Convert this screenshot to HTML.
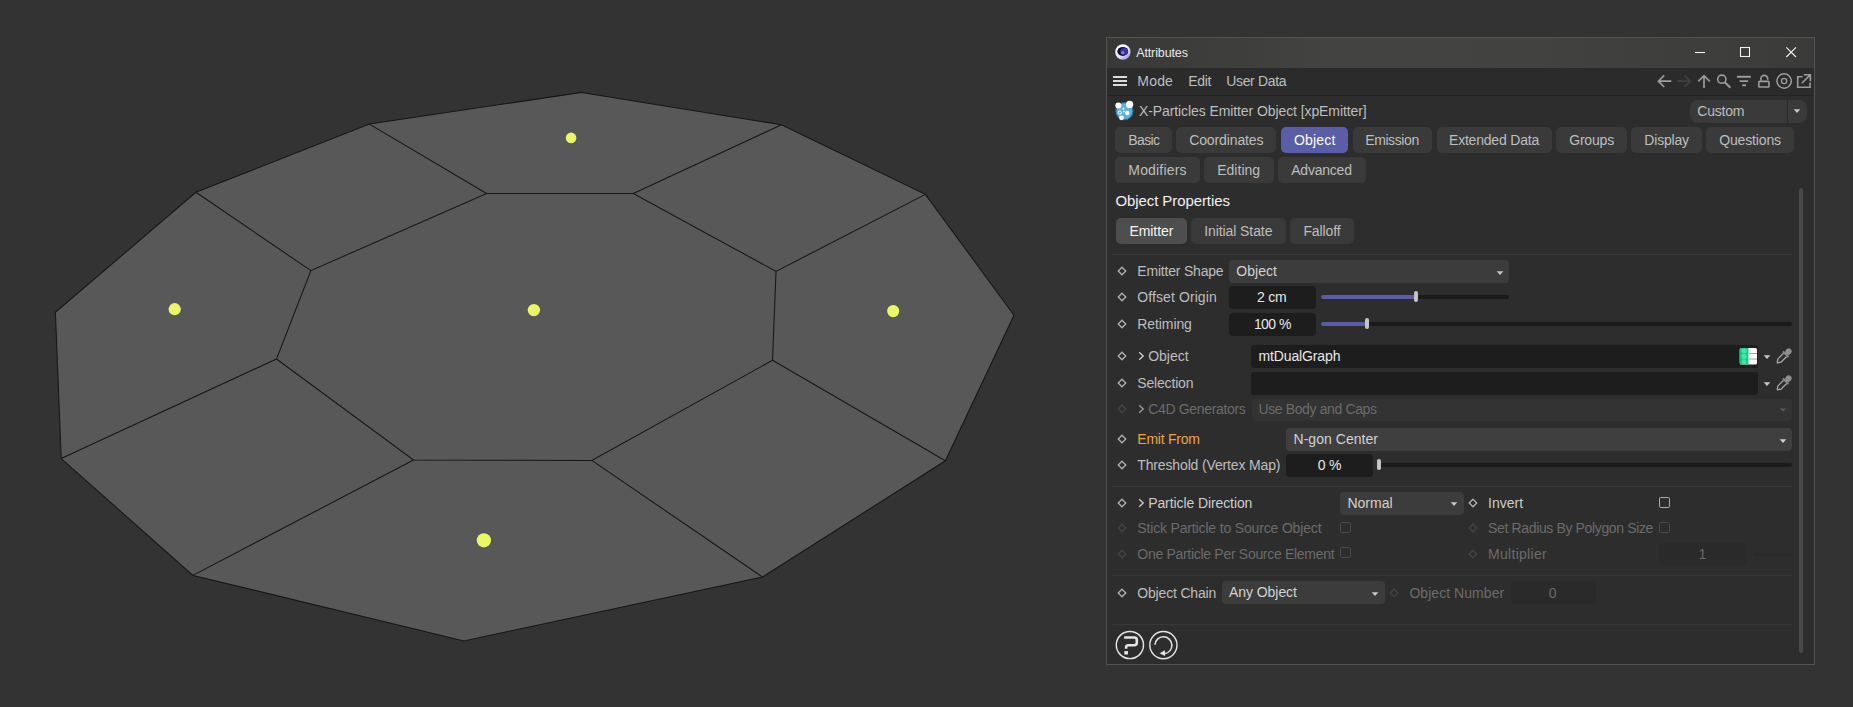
<!DOCTYPE html>
<html lang="en"><head><meta charset="utf-8"><title>Attributes</title><style>
html,body{margin:0;padding:0;background:#333333;overflow:hidden}
body{width:1853px;height:707px;position:relative;font-family:"Liberation Sans",sans-serif}
.b{position:absolute;display:block;box-sizing:content-box}
.t{position:absolute;white-space:nowrap;line-height:20px;height:20px}
.win{background:#2d2d2d;border:1px solid #535353;box-sizing:border-box}
</style></head>
<body>
<svg class="b" style="left:0;top:0" width="1060" height="707" viewBox="0 0 1060 707">
<polygon points="581.5,92.4 781.4,124.8 925.4,194.4 1014.0,315.3 945.4,460.8 762.5,577.0 464.0,640.9 192.9,575.4 61.2,458.6 55.4,312.3 195.9,192.3 369.4,124.1" fill="#585858" stroke="#161616" stroke-width="1.05"/>
<polygon points="486.6,193.5 633.3,193.5 776.0,271.4 772.5,360.3 591.8,460.4 413.5,460.0 276.5,358.95 310.9,270.6" fill="none" stroke="#161616" stroke-width="1.05"/>
<line x1="486.6" y1="193.5" x2="369.4" y2="124.1" stroke="#161616" stroke-width="1.05"/>
<line x1="633.3" y1="193.5" x2="781.4" y2="124.8" stroke="#161616" stroke-width="1.05"/>
<line x1="776.0" y1="271.4" x2="925.4" y2="194.4" stroke="#161616" stroke-width="1.05"/>
<line x1="772.5" y1="360.3" x2="945.4" y2="460.8" stroke="#161616" stroke-width="1.05"/>
<line x1="591.8" y1="460.4" x2="762.5" y2="577.0" stroke="#161616" stroke-width="1.05"/>
<line x1="413.5" y1="460.0" x2="192.9" y2="575.4" stroke="#161616" stroke-width="1.05"/>
<line x1="276.5" y1="358.95" x2="61.2" y2="458.6" stroke="#161616" stroke-width="1.05"/>
<line x1="310.9" y1="270.6" x2="195.9" y2="192.3" stroke="#161616" stroke-width="1.05"/>
<circle cx="571.1" cy="137.9" r="5.3" fill="#ebf766"/>
<circle cx="174.7" cy="309.2" r="6.1" fill="#ebf766"/>
<circle cx="533.9" cy="310.1" r="6.2" fill="#ebf766"/>
<circle cx="893.2" cy="311.1" r="6.1" fill="#ebf766"/>
<circle cx="483.9" cy="540.3" r="7.1" fill="#ebf766"/>
</svg>
<div class="b win" style="left:1106px;top:37px;width:709px;height:628px"></div>
<div class="b" style="left:1107.00px;top:38.00px;width:707.00px;height:30.00px;background:linear-gradient(90deg,#383837 0%,#434341 32%,#424240 60%,#3b3b39 100%);border-radius:0px;"></div>
<div class="b" style="left:1107.00px;top:68.00px;width:707.00px;height:27.00px;background:#2b2b2b;border-radius:0px;"></div>
<div class="b" style="left:1107.00px;top:95.00px;width:707.00px;height:1.00px;background:#232323;border-radius:0px;"></div>
<svg class="b" style="left:1114px;top:43px" width="18" height="18" viewBox="0 0 18 18">
<defs><linearGradient id="lg" x1="0.15" y1="0.1" x2="0.85" y2="0.95"><stop offset="0" stop-color="#ffffff"/><stop offset="0.55" stop-color="#e6e6f6"/><stop offset="1" stop-color="#9a97da"/></linearGradient></defs>
<circle cx="8.9" cy="9" r="7.7" fill="url(#lg)"/>
<ellipse cx="8.8" cy="8.4" rx="5.4" ry="4.5" fill="#0c0a34"/>
<ellipse cx="10.1" cy="8.5" rx="3.8" ry="3.6" fill="#3a35a2"/>
<circle cx="8.7" cy="9.7" r="1.6" fill="#8b88e4" opacity="0.85"/>
</svg>
<div class="t " style="left:1136.20px;top:42.87px;font-size:12.5px;color:#e8e8e8;letter-spacing:-0.121px;">Attributes</div>
<svg class="b" style="left:1690px;top:44px" width="112" height="16" viewBox="1690 44 112 16" fill="none" stroke="#f0f0f0" stroke-width="1.1">
<path d="M1695 52.5H1705"/>
<rect x="1740.5" y="47.5" width="9" height="9"/>
<path d="M1786.3 47.3L1796 57M1796 47.3L1786.3 57"/>
</svg>
<div class="b" style="left:1113.00px;top:76.10px;width:14.20px;height:2.20px;background:#dcdcdc;border-radius:0px;"></div>
<div class="b" style="left:1113.00px;top:80.10px;width:14.20px;height:2.20px;background:#dcdcdc;border-radius:0px;"></div>
<div class="b" style="left:1113.00px;top:84.00px;width:14.20px;height:2.20px;background:#dcdcdc;border-radius:0px;"></div>
<div class="t " style="left:1137.30px;top:71.05px;font-size:14px;color:#bebebe;letter-spacing:0.192px;">Mode</div>
<div class="t " style="left:1188.30px;top:71.05px;font-size:14px;color:#bebebe;letter-spacing:-0.381px;">Edit</div>
<div class="t " style="left:1226.30px;top:71.05px;font-size:14px;color:#bebebe;letter-spacing:-0.359px;">User Data</div>
<svg class="b" style="left:1654px;top:72px" width="160" height="20" viewBox="1654 72 160 20" fill="none" stroke="#9c9c9c" stroke-width="1.7" stroke-linecap="butt">
<path d="M1671.3 81.2H1658.8M1664.2 75.4L1658.4 81.2L1664.2 87"/>
<g stroke="#414141"><path d="M1677.4 81.2H1689.8M1684.4 75.4L1690.2 81.2L1684.4 87"/></g>
<path d="M1704 88V75.8M1698.2 81.4L1704 75.6L1709.8 81.4"/>
<circle cx="1721.8" cy="79.2" r="4.1" stroke-width="1.6"/><path d="M1724.8 82.3L1730.4 87.7" stroke-width="2"/>
<path d="M1736.9 76.7H1750.8M1739.6 81.1H1748.1M1742.3 85.3H1745.9" stroke-width="1.9"/>
<rect x="1758.8" y="81.4" width="10.2" height="5.6" rx="0.8" stroke-width="1.6"/><path d="M1760.9 80.8V78.8a3.4 3.4 0 0 1 6.8 0V79.8" stroke-width="1.6"/>
<circle cx="1784.1" cy="81" r="7.2" stroke-width="1.5"/><circle cx="1784.1" cy="81" r="2.6" stroke-width="1.4"/>
<path d="M1802.6 76.8H1797.7V87.3H1810.1V82.4M1803.8 74.7H1810.4V81.3M1810.2 74.9L1801.8 83.3" stroke-width="1.6"/>
</svg>
<svg class="b" style="left:1114px;top:100px" width="21" height="21" viewBox="0 0 21 21">
<circle cx="10.4" cy="11.2" r="8.6" fill="#5db1dd" stroke="#2b6a96" stroke-width="1.1"/>
<circle cx="4.3" cy="5.4" r="3" fill="#fff"/>
<circle cx="15.6" cy="4.4" r="3.6" fill="#fff"/>
<circle cx="9.4" cy="8.7" r="1" fill="#fff"/>
<circle cx="9.9" cy="11.6" r="0.8" fill="#fff"/>
<circle cx="5.8" cy="12.6" r="1.6" fill="none" stroke="#fff" stroke-width="1"/>
<circle cx="13.2" cy="13" r="2.2" fill="#fff"/>
<circle cx="7.5" cy="17.8" r="2.4" fill="#fff"/>
</svg>
<div class="t " style="left:1138.90px;top:101.15px;font-size:14px;color:#bebebe;letter-spacing:-0.088px;">X-Particles Emitter Object [xpEmitter]</div>
<div class="b" style="left:1690.00px;top:100.00px;width:117.00px;height:23.00px;background:#3a3a3a;border-radius:8px;"></div>
<div class="b" style="left:1787.00px;top:100.00px;width:1.00px;height:23.00px;background:#2a2a2a;border-radius:0px;"></div>
<div class="t " style="left:1697.30px;top:101.15px;font-size:14px;color:#bebebe;letter-spacing:-0.239px;">Custom</div>
<svg class="b" style="left:1792.00px;top:107.00px" width="10" height="8" viewBox="-5 -4 10 8"><path d="M-3.30 -1.70L3.30 -1.70L0 1.90Z" fill="#c8c8c8"/></svg>
<div class="b" style="left:1115.40px;top:127.20px;width:56.60px;height:25.50px;background:#3a3a3a;border-radius:5px;"></div>
<div class="t " style="left:1128.30px;top:130.15px;font-size:14px;color:#bebebe;letter-spacing:-0.647px;">Basic</div>
<div class="b" style="left:1176.30px;top:127.20px;width:100.20px;height:25.50px;background:#3a3a3a;border-radius:5px;"></div>
<div class="t " style="left:1189.20px;top:130.15px;font-size:14px;color:#bebebe;letter-spacing:-0.118px;">Coordinates</div>
<div class="b" style="left:1281.10px;top:127.20px;width:66.70px;height:25.50px;background:#5a5ea8;border-radius:5px;"></div>
<div class="t " style="left:1294.00px;top:130.15px;font-size:14px;color:#ffffff;letter-spacing:0.172px;">Object</div>
<div class="b" style="left:1352.80px;top:127.20px;width:79.00px;height:25.50px;background:#3a3a3a;border-radius:5px;"></div>
<div class="t " style="left:1365.20px;top:130.15px;font-size:14px;color:#bebebe;letter-spacing:-0.400px;">Emission</div>
<div class="b" style="left:1436.50px;top:127.20px;width:115.50px;height:25.50px;background:#3a3a3a;border-radius:5px;"></div>
<div class="t " style="left:1449.00px;top:130.15px;font-size:14px;color:#bebebe;letter-spacing:-0.202px;">Extended Data</div>
<div class="b" style="left:1556.30px;top:127.20px;width:70.40px;height:25.50px;background:#3a3a3a;border-radius:5px;"></div>
<div class="t " style="left:1569.20px;top:130.15px;font-size:14px;color:#bebebe;letter-spacing:-0.187px;">Groups</div>
<div class="b" style="left:1631.20px;top:127.20px;width:70.60px;height:25.50px;background:#3a3a3a;border-radius:5px;"></div>
<div class="t " style="left:1644.30px;top:130.15px;font-size:14px;color:#bebebe;letter-spacing:-0.187px;">Display</div>
<div class="b" style="left:1706.10px;top:127.20px;width:87.80px;height:25.50px;background:#3a3a3a;border-radius:5px;"></div>
<div class="t " style="left:1719.20px;top:130.15px;font-size:14px;color:#bebebe;letter-spacing:-0.139px;">Questions</div>
<div class="b" style="left:1115.40px;top:157.20px;width:84.20px;height:25.50px;background:#3a3a3a;border-radius:5px;"></div>
<div class="t " style="left:1128.30px;top:160.05px;font-size:14px;color:#bebebe;letter-spacing:0.178px;">Modifiers</div>
<div class="b" style="left:1204.10px;top:157.20px;width:69.70px;height:25.50px;background:#3a3a3a;border-radius:5px;"></div>
<div class="t " style="left:1217.20px;top:160.05px;font-size:14px;color:#bebebe;letter-spacing:0.027px;">Editing</div>
<div class="b" style="left:1278.40px;top:157.20px;width:87.30px;height:25.50px;background:#3a3a3a;border-radius:5px;"></div>
<div class="t " style="left:1291.20px;top:160.05px;font-size:14px;color:#bebebe;letter-spacing:-0.210px;">Advanced</div>
<div class="t " style="left:1115.40px;top:191.20px;font-size:15px;color:#f2f2f2;letter-spacing:-0.082px;">Object Properties</div>
<div class="b" style="left:1115.80px;top:218.20px;width:71.10px;height:25.50px;background:#4e4e4e;border-radius:5px;"></div>
<div class="t " style="left:1129.40px;top:220.85px;font-size:14px;color:#f4f4f4;letter-spacing:-0.049px;">Emitter</div>
<div class="b" style="left:1191.00px;top:218.20px;width:95.10px;height:25.50px;background:#3a3a3a;border-radius:5px;"></div>
<div class="t " style="left:1204.20px;top:220.85px;font-size:14px;color:#bebebe;letter-spacing:-0.082px;">Initial State</div>
<div class="b" style="left:1290.10px;top:218.20px;width:63.90px;height:25.50px;background:#3a3a3a;border-radius:5px;"></div>
<div class="t " style="left:1303.40px;top:220.85px;font-size:14px;color:#bebebe;letter-spacing:-0.096px;">Falloff</div>
<div class="b" style="left:1112.40px;top:253.60px;width:679.40px;height:1.00px;background:#383838;border-radius:0px;"></div>
<svg class="b" style="left:1116.00px;top:265.40px" width="12" height="12" viewBox="-6 -6 12 12"><path d="M0-3.8L3.8 0L0 3.8L-3.8 0Z" fill="none" stroke="#b4b4b4" stroke-width="1.25"/></svg>
<div class="t " style="left:1137.30px;top:261.35px;font-size:14px;color:#bebebe;letter-spacing:-0.201px;">Emitter Shape</div>
<div class="b" style="left:1229.00px;top:260.40px;width:280.40px;height:22.60px;background:#3c3c3c;border-radius:4px;"></div>
<div class="t " style="left:1236.30px;top:261.35px;font-size:14px;color:#d2d2d2;letter-spacing:0.022px;">Object</div>
<svg class="b" style="left:1494.90px;top:268.60px" width="10" height="8" viewBox="-5 -4 10 8"><path d="M-3.30 -1.70L3.30 -1.70L0 1.90Z" fill="#c8c8c8"/></svg>
<svg class="b" style="left:1116.00px;top:291.40px" width="12" height="12" viewBox="-6 -6 12 12"><path d="M0-3.8L3.8 0L0 3.8L-3.8 0Z" fill="none" stroke="#b4b4b4" stroke-width="1.25"/></svg>
<div class="t " style="left:1137.30px;top:287.35px;font-size:14px;color:#bebebe;letter-spacing:0.090px;">Offset Origin</div>
<div class="b" style="left:1229.00px;top:286.40px;width:87.20px;height:22.40px;background:#1d1d1d;border-radius:4px;"></div>
<div class="t " style="left:1257.10px;top:287.35px;font-size:14px;color:#e8e8e8;letter-spacing:-0.236px;">2 cm</div>
<div class="b" style="left:1320.70px;top:294.60px;width:188.70px;height:4.00px;background:#1b1b1b;border-radius:2px;"></div>
<div class="b" style="left:1320.70px;top:294.60px;width:95.10px;height:4.00px;background:#5a5da6;border-radius:2px;"></div>
<div class="b" style="left:1413.80px;top:291.10px;width:4.00px;height:11.00px;background:#c4c4c4;border-radius:2px;"></div>
<svg class="b" style="left:1116.00px;top:318.00px" width="12" height="12" viewBox="-6 -6 12 12"><path d="M0-3.8L3.8 0L0 3.8L-3.8 0Z" fill="none" stroke="#b4b4b4" stroke-width="1.25"/></svg>
<div class="t " style="left:1137.30px;top:314.05px;font-size:14px;color:#bebebe;letter-spacing:-0.094px;">Retiming</div>
<div class="b" style="left:1229.00px;top:313.40px;width:87.20px;height:22.40px;background:#1d1d1d;border-radius:4px;"></div>
<div class="t " style="left:1253.90px;top:314.05px;font-size:14px;color:#e8e8e8;letter-spacing:-0.561px;">100 %</div>
<div class="b" style="left:1320.70px;top:321.70px;width:471.20px;height:4.00px;background:#1b1b1b;border-radius:2px;"></div>
<div class="b" style="left:1320.70px;top:321.70px;width:46.40px;height:4.00px;background:#5a5da6;border-radius:2px;"></div>
<div class="b" style="left:1365.10px;top:318.20px;width:4.00px;height:11.00px;background:#c4c4c4;border-radius:2px;"></div>
<svg class="b" style="left:1116.00px;top:350.20px" width="12" height="12" viewBox="-6 -6 12 12"><path d="M0-3.8L3.8 0L0 3.8L-3.8 0Z" fill="none" stroke="#b4b4b4" stroke-width="1.25"/></svg>
<svg class="b" style="left:1138.00px;top:351.20px" width="7" height="10" viewBox="0 0 7 10"><path d="M1.2 1.3L5.2 5L1.2 8.7" fill="none" stroke="#c9c9c9" stroke-width="1.4"/></svg>
<div class="t " style="left:1148.20px;top:346.15px;font-size:14px;color:#bebebe;letter-spacing:0.005px;">Object</div>
<div class="b" style="left:1251.20px;top:345.20px;width:506.70px;height:22.60px;background:#1d1d1d;border-radius:3px;"></div>
<div class="t " style="left:1258.40px;top:346.15px;font-size:14px;color:#e8e8e8;letter-spacing:-0.115px;">mtDualGraph</div>
<svg class="b" style="left:1739px;top:347px" width="19" height="18" viewBox="0 0 19 18">
<rect x="0.7" y="0.9" width="17.3" height="16.7" rx="1.6" fill="#ffffff"/>
<path d="M2.3 0.9H9.4V17.6H2.3a1.6 1.6 0 0 1 -1.6 -1.6V2.5a1.6 1.6 0 0 1 1.6 -1.6Z" fill="#17c482"/>
<circle cx="5.1" cy="3.9" r="2.7" fill="#35eaa4"/><circle cx="5.1" cy="9.4" r="2.7" fill="#35eaa4"/><circle cx="5.1" cy="14.7" r="2.5" fill="#35eaa4"/>
<path d="M9.8 6.5H18M9.8 12H18" stroke="#9c9c9c" stroke-width="1"/>
</svg>
<svg class="b" style="left:1762.00px;top:353.00px" width="10" height="8" viewBox="-5 -4 10 8"><path d="M-3.30 -1.70L3.30 -1.70L0 1.90Z" fill="#c8c8c8"/></svg>
<svg class="b" style="left:1774.40px;top:345.80px" width="20" height="20" viewBox="-10 -10 20 20"><g transform="rotate(45) translate(0 1.4)" fill="none" stroke="#a4a4a4" stroke-width="1.35" stroke-linejoin="round">
<path d="M-2.2 -3V5.2L0 8.1L2.2 5.2V-3"/>
<rect x="-4" y="-4.7" width="8" height="1.8" fill="#8e8e8e" stroke="none"/>
<ellipse cx="0" cy="-7.7" rx="3" ry="3.3" fill="#8e8e8e" stroke="none"/>
</g></svg>
<svg class="b" style="left:1116.00px;top:377.20px" width="12" height="12" viewBox="-6 -6 12 12"><path d="M0-3.8L3.8 0L0 3.8L-3.8 0Z" fill="none" stroke="#b4b4b4" stroke-width="1.25"/></svg>
<div class="t " style="left:1137.30px;top:373.35px;font-size:14px;color:#bebebe;letter-spacing:-0.177px;">Selection</div>
<div class="b" style="left:1251.20px;top:372.20px;width:506.70px;height:22.40px;background:#1d1d1d;border-radius:3px;"></div>
<svg class="b" style="left:1762.00px;top:379.80px" width="10" height="8" viewBox="-5 -4 10 8"><path d="M-3.30 -1.70L3.30 -1.70L0 1.90Z" fill="#c8c8c8"/></svg>
<svg class="b" style="left:1774.40px;top:372.60px" width="20" height="20" viewBox="-10 -10 20 20"><g transform="rotate(45) translate(0 1.4)" fill="none" stroke="#a4a4a4" stroke-width="1.35" stroke-linejoin="round">
<path d="M-2.2 -3V5.2L0 8.1L2.2 5.2V-3"/>
<rect x="-4" y="-4.7" width="8" height="1.8" fill="#8e8e8e" stroke="none"/>
<ellipse cx="0" cy="-7.7" rx="3" ry="3.3" fill="#8e8e8e" stroke="none"/>
</g></svg>
<svg class="b" style="left:1116.00px;top:403.20px" width="12" height="12" viewBox="-6 -6 12 12"><path d="M0-3.8L3.8 0L0 3.8L-3.8 0Z" fill="none" stroke="#474747" stroke-width="1.25"/></svg>
<svg class="b" style="left:1138.00px;top:404.20px" width="7" height="10" viewBox="0 0 7 10"><path d="M1.2 1.3L5.2 5L1.2 8.7" fill="none" stroke="#9a9a9a" stroke-width="1.4"/></svg>
<div class="t " style="left:1148.20px;top:399.35px;font-size:14px;color:#6b6b6b;letter-spacing:-0.331px;">C4D Generators</div>
<div class="b" style="left:1252.10px;top:398.80px;width:540.30px;height:21.80px;background:#333333;border-radius:4px;"></div>
<div class="t " style="left:1258.40px;top:399.35px;font-size:14px;color:#6b6b6b;letter-spacing:-0.372px;">Use Body and Caps</div>
<svg class="b" style="left:1778.30px;top:406.20px" width="10" height="8" viewBox="-5 -4 10 8"><path d="M-3.13 -1.61L3.13 -1.61L0 1.80Z" fill="#5a5a5a"/></svg>
<svg class="b" style="left:1116.00px;top:433.30px" width="12" height="12" viewBox="-6 -6 12 12"><path d="M0-3.8L3.8 0L0 3.8L-3.8 0Z" fill="none" stroke="#b4b4b4" stroke-width="1.25"/></svg>
<div class="t " style="left:1137.30px;top:429.25px;font-size:14px;color:#f2a23c;letter-spacing:-0.251px;">Emit From</div>
<div class="b" style="left:1286.10px;top:428.30px;width:506.30px;height:22.60px;background:#3f3f3f;border-radius:4px;"></div>
<div class="t " style="left:1293.50px;top:429.25px;font-size:14px;color:#d2d2d2;letter-spacing:0.038px;">N-gon Center</div>
<svg class="b" style="left:1778.30px;top:436.60px" width="10" height="8" viewBox="-5 -4 10 8"><path d="M-3.30 -1.70L3.30 -1.70L0 1.90Z" fill="#d0d0d0"/></svg>
<svg class="b" style="left:1116.00px;top:459.30px" width="12" height="12" viewBox="-6 -6 12 12"><path d="M0-3.8L3.8 0L0 3.8L-3.8 0Z" fill="none" stroke="#b4b4b4" stroke-width="1.25"/></svg>
<div class="t " style="left:1137.30px;top:454.75px;font-size:14px;color:#bebebe;letter-spacing:-0.145px;">Threshold (Vertex Map)</div>
<div class="b" style="left:1286.10px;top:454.30px;width:86.60px;height:22.40px;background:#1d1d1d;border-radius:4px;"></div>
<div class="t " style="left:1317.70px;top:454.75px;font-size:14px;color:#e8e8e8;letter-spacing:-0.242px;">0 %</div>
<div class="b" style="left:1377.30px;top:462.70px;width:414.60px;height:4.00px;background:#1b1b1b;border-radius:2px;"></div>
<div class="b" style="left:1377.30px;top:459.20px;width:4.00px;height:11.00px;background:#c4c4c4;border-radius:2px;"></div>
<div class="b" style="left:1112.40px;top:486.00px;width:679.40px;height:1.00px;background:#383838;border-radius:0px;"></div>
<svg class="b" style="left:1116.00px;top:497.20px" width="12" height="12" viewBox="-6 -6 12 12"><path d="M0-3.8L3.8 0L0 3.8L-3.8 0Z" fill="none" stroke="#b4b4b4" stroke-width="1.25"/></svg>
<svg class="b" style="left:1138.00px;top:498.20px" width="7" height="10" viewBox="0 0 7 10"><path d="M1.2 1.3L5.2 5L1.2 8.7" fill="none" stroke="#c9c9c9" stroke-width="1.4"/></svg>
<div class="t " style="left:1148.20px;top:493.45px;font-size:14px;color:#cccccc;letter-spacing:-0.096px;">Particle Direction</div>
<div class="b" style="left:1340.40px;top:492.30px;width:123.60px;height:22.40px;background:#3c3c3c;border-radius:4px;"></div>
<div class="t " style="left:1347.40px;top:493.45px;font-size:14px;color:#d2d2d2;letter-spacing:0.029px;">Normal</div>
<svg class="b" style="left:1448.60px;top:500.20px" width="10" height="8" viewBox="-5 -4 10 8"><path d="M-3.30 -1.70L3.30 -1.70L0 1.90Z" fill="#c8c8c8"/></svg>
<svg class="b" style="left:1467.10px;top:497.20px" width="12" height="12" viewBox="-6 -6 12 12"><path d="M0-3.8L3.8 0L0 3.8L-3.8 0Z" fill="none" stroke="#b4b4b4" stroke-width="1.25"/></svg>
<div class="t " style="left:1488.10px;top:493.45px;font-size:14px;color:#cccccc;letter-spacing:0.014px;">Invert</div>
<div class="b" style="left:1659.30px;top:497.30px;width:9.00px;height:9.00px;border:1.5px solid #adadad;border-radius:1.8px"></div>
<svg class="b" style="left:1116.00px;top:522.20px" width="12" height="12" viewBox="-6 -6 12 12"><path d="M0-3.8L3.8 0L0 3.8L-3.8 0Z" fill="none" stroke="#444444" stroke-width="1.25"/></svg>
<div class="t " style="left:1137.30px;top:518.35px;font-size:14px;color:#6b6b6b;letter-spacing:-0.161px;">Stick Particle to Source Object</div>
<div class="b" style="left:1340.20px;top:522.20px;width:8.60px;height:8.60px;border:1.5px solid #4b4b4b;border-radius:1.8px"></div>
<svg class="b" style="left:1467.10px;top:522.20px" width="12" height="12" viewBox="-6 -6 12 12"><path d="M0-3.8L3.8 0L0 3.8L-3.8 0Z" fill="none" stroke="#444444" stroke-width="1.25"/></svg>
<div class="t " style="left:1488.10px;top:518.35px;font-size:14px;color:#6b6b6b;letter-spacing:-0.363px;">Set Radius By Polygon Size</div>
<div class="b" style="left:1659.30px;top:522.30px;width:8.80px;height:8.80px;border:1.5px solid #484848;border-radius:1.8px"></div>
<svg class="b" style="left:1116.00px;top:548.20px" width="12" height="12" viewBox="-6 -6 12 12"><path d="M0-3.8L3.8 0L0 3.8L-3.8 0Z" fill="none" stroke="#444444" stroke-width="1.25"/></svg>
<div class="t " style="left:1137.30px;top:544.35px;font-size:14px;color:#6b6b6b;letter-spacing:-0.297px;">One Particle Per Source Element</div>
<div class="b" style="left:1340.20px;top:547.20px;width:8.60px;height:8.60px;border:1.5px solid #4b4b4b;border-radius:1.8px"></div>
<svg class="b" style="left:1467.10px;top:548.20px" width="12" height="12" viewBox="-6 -6 12 12"><path d="M0-3.8L3.8 0L0 3.8L-3.8 0Z" fill="none" stroke="#444444" stroke-width="1.25"/></svg>
<div class="t " style="left:1488.10px;top:544.35px;font-size:14px;color:#6b6b6b;letter-spacing:0.278px;">Multiplier</div>
<div class="b" style="left:1659.20px;top:543.40px;width:86.90px;height:22.00px;background:#2a2a2a;border-radius:4px;"></div>
<div class="t " style="left:1698.40px;top:544.35px;font-size:14px;color:#6a6a6a;">1</div>
<div class="b" style="left:1754.00px;top:552.60px;width:37.80px;height:3.00px;background:#2a2a2a;border-radius:2px;"></div>
<div class="b" style="left:1112.40px;top:575.20px;width:679.40px;height:1.00px;background:#383838;border-radius:0px;"></div>
<svg class="b" style="left:1116.00px;top:586.80px" width="12" height="12" viewBox="-6 -6 12 12"><path d="M0-3.8L3.8 0L0 3.8L-3.8 0Z" fill="none" stroke="#b4b4b4" stroke-width="1.25"/></svg>
<div class="t " style="left:1137.30px;top:583.35px;font-size:14px;color:#bebebe;letter-spacing:-0.178px;">Object Chain</div>
<div class="b" style="left:1222.20px;top:581.40px;width:163.00px;height:22.40px;background:#3c3c3c;border-radius:4px;"></div>
<div class="t " style="left:1229.00px;top:582.35px;font-size:14px;color:#d2d2d2;letter-spacing:-0.058px;">Any Object</div>
<svg class="b" style="left:1369.80px;top:589.60px" width="10" height="8" viewBox="-5 -4 10 8"><path d="M-3.30 -1.70L3.30 -1.70L0 1.90Z" fill="#c8c8c8"/></svg>
<svg class="b" style="left:1388.20px;top:586.80px" width="12" height="12" viewBox="-6 -6 12 12"><path d="M0-3.8L3.8 0L0 3.8L-3.8 0Z" fill="none" stroke="#444444" stroke-width="1.25"/></svg>
<div class="t " style="left:1409.40px;top:583.35px;font-size:14px;color:#6b6b6b;letter-spacing:0.050px;">Object Number</div>
<div class="b" style="left:1510.70px;top:582.40px;width:85.50px;height:21.40px;background:#2a2a2a;border-radius:4px;"></div>
<div class="t " style="left:1548.80px;top:583.35px;font-size:14px;color:#6a6a6a;">0</div>
<div class="b" style="left:1112.40px;top:623.80px;width:679.40px;height:1.00px;background:#383838;border-radius:0px;"></div>
<svg class="b" style="left:1114px;top:629px" width="66" height="33" viewBox="1114 629 66 33" fill="none" stroke="#e4e4e4">
<circle cx="1129.9" cy="645" r="13.6" stroke-width="1.45"/>
<path d="M1124.1 637.5H1134.4Q1136.8 637.5 1136.8 639.9V642.8Q1136.8 645.2 1134.4 645.2H1128.3Q1126.1 645.2 1126.1 647.4V648.8" stroke-width="2.6"/>
<rect x="1124.3" y="651.1" width="3.7" height="3.4" fill="#e4e4e4" stroke="none"/>
<circle cx="1163.4" cy="645.1" r="13.6" stroke-width="1.45"/>
<path d="M1154.9 644.7A8.5 8.5 0 1 1 1164.6 653.7" stroke-width="1.55"/>
<path d="M1159.6 653.2L1165 650.3V656Z" fill="#e4e4e4" stroke="none"/>
</svg>
<div class="b" style="left:1798.80px;top:188.00px;width:4.20px;height:465.40px;background:#484848;border-radius:2px;"></div>
</body></html>
